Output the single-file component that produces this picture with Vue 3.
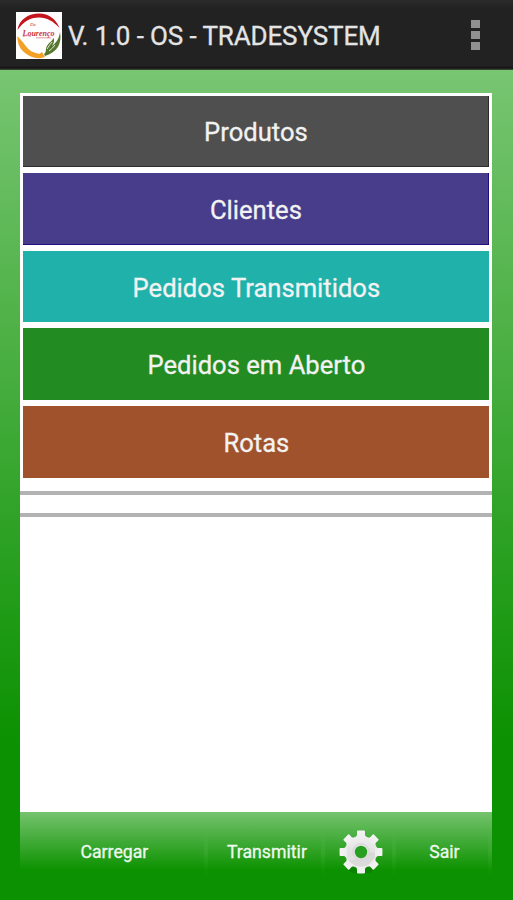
<!-- App.vue -->

<script setup>
const menuItems = [
  { id: 'produtos', label: 'Produtos' },
  { id: 'clientes', label: 'Clientes' },
  { id: 'transmitidos', label: 'Pedidos Transmitidos' },
  { id: 'aberto', label: 'Pedidos em Aberto' },
  { id: 'rotas', label: 'Rotas' },
];

// Gear teeth, one every 45 degrees
const teeth = [0, 45, 90, 135, 180, 225, 270, 315];
</script>

<template>
  <div class="screen">
    <header class="action-bar">
      <svg class="logo" viewBox="0 0 46 47">
        <rect width="46" height="47" fill="#fefefe" />
        <path d="M1.5 18 C3 7 13 1.5 23 1.5 C33 1.5 40 7 43.5 16 C37 9 31 5.5 23 5.5 C14 5.5 7 10 1.5 18 Z" fill="#c4141c" />
        <path d="M1.5 24 C4 27 7 30 9 33 C13 39 18 41 24 42 L27 45 C22 48 14 45 9 41 C4 37 1 31 1.5 24 Z" fill="#f2a126" />
        <path d="M22 43 L26 40 L29 45 L25 46 Z" fill="#f2a126" />
        <path d="M44 20 C46 31 42 40 29 44 L28 42 C31 40 29 37 31 34 C33 30 37 29 37 26 C39 27 38 31 36 34 C40 31 43 27 44 20 Z" fill="#55772f" />
        <path d="M31 37 Q34 32 36 30 M33 39 Q37 36 39 33" fill="none" stroke="#dfe8d2" stroke-width="1" />
        <text x="14" y="14" class="logo-small">De</text>
        <text x="6.5" y="23.5" class="logo-name" textLength="32" lengthAdjust="spacingAndGlyphs">Lourenço</text>
        <path d="M7 24.5 Q11 22.5 15 24.5 M20 25.8 H35" fill="none" stroke="#de8087" stroke-width=".8" />
      </svg>
      <h1 class="title">V. 1.0 - OS - TRADESYSTEM</h1>
      <div class="overflow">
        <span></span>
        <span></span>
        <span></span>
      </div>
    </header>

    <main class="content">
      <nav class="menu">
        <button v-for="item in menuItems" :key="item.id" class="menu-button" :class="item.id">
          {{ item.label }}
        </button>
      </nav>
      <div class="divider"></div>
      <div class="divider second"></div>
    </main>

    <footer class="toolbar">
      <button class="tool carregar">Carregar</button>
      <button class="tool transmitir">Transmitir</button>
      <button class="tool config" aria-label="Config">
        <svg class="gear" viewBox="-23 -23 46 46">
          <defs>
            <linearGradient id="metal" gradientUnits="userSpaceOnUse" x1="0" y1="-22" x2="0" y2="22">
              <stop offset="0" stop-color="#f4f4f4" />
              <stop offset=".55" stop-color="#e0e0e0" />
              <stop offset="1" stop-color="#e9e9e9" />
            </linearGradient>
          </defs>
          <ellipse cx="0" cy="17" rx="13" ry="5" class="shadow" />
          <g fill="url(#metal)">
            <circle r="16.2" />
            <path v-for="a in teeth" :key="a" d="M-5.4 -14 L-4 -17 V-20.6 Q-4 -21.4 -3.2 -21.4 H3.2 Q4 -21.4 4 -20.6 V-17 L5.4 -14 Z" :transform="`rotate(${a})`" />
          </g>
          <path d="M-13 8 Q-1 8 4 3 Q10 -2 14 2 Q13 13 0 15 Q-8 14 -13 8 Z" class="shade" />
          <circle r="8.2" class="ring" />
          <circle r="6.2" class="hole" />
        </svg>
      </button>
      <button class="tool sair">Sair</button>
    </footer>
  </div>
</template>

<style>
body { margin: 0; }
</style>

<style scoped>
.screen { box-sizing: border-box; width: 513px; height: 900px; display: flex; flex-direction: column; overflow: hidden; font-family: Roboto, sans-serif; background: linear-gradient(#78c572 70px, #0b9101 745px); }
button { border: 0; padding: 0; font-family: inherit; }

.action-bar { box-sizing: border-box; flex: none; height: 70px; display: flex; align-items: center; padding: 0 33px 0 16px; background: linear-gradient(#2b2b2b, #222 8px, #222 66px, #160f17 68px, #3a5a38 70px); }
.logo { width: 46px; height: 47px; }
.logo-small { font: italic 5px "Liberation Serif", serif; fill: #c4343a; }
.logo-name { font: italic bold 9px "Liberation Serif", serif; fill: #cc3640; }
.title { margin: 2px 0 0 6px; font-size: 26px; font-weight: 400; line-height: 30px; letter-spacing: -.12px; color: #e4e4e4; white-space: nowrap; -webkit-text-stroke: .3px #e4e4e4; }
.overflow { margin-left: auto; display: flex; flex-direction: column; gap: 3px; }
.overflow span { width: 9px; height: 8px; background: #919191; }

.content { flex: none; box-sizing: border-box; width: 472px; height: 719.5px; margin: 22.5px 0 0 20.4px; background: #fff; }
.menu { display: flex; flex-direction: column; gap: 6.1px; padding: 3.2px 3px 0; }
.menu-button { height: 71.5px; font-size: 25.6px; color: #f2f2f2; padding-top: 2px; -webkit-text-stroke: .3px #f2f2f2; }
.produtos { background: #4f4f4f; border-bottom: 1px solid #2c2c2c; border-right: 1px solid #2c2c2c; }
.clientes { background: #483d8b; border-bottom: 1px solid #1d107c; border-right: 1px solid #1d107c; }
.transmitidos { background: #20b2aa; }
.aberto { background: #228b22; }
.rotas { background: #a0522d; }
.divider { height: 4px; margin-top: 13.6px; background: #b3b3b3; }
.divider.second { margin-top: 17.6px; }

.toolbar { flex: none; display: flex; width: 472px; height: 66px; margin-left: 20.4px; background: linear-gradient(#75c36e, #0c9200 58px); }
.tool { box-sizing: border-box; background: linear-gradient(transparent 18px, rgba(120, 210, 110, .12) 40px, transparent 64px) right / 4px 100% no-repeat; font-size: 17.7px; color: #eef8ee; padding-top: 14px; -webkit-text-stroke: .3px #eef8ee; }
.carregar { width: 188px; }
.transmitir { width: 117px; }
.config { width: 71px; display: flex; justify-content: center; align-items: flex-start; padding-top: 17px; }
.sair { width: 96px; }
.gear { width: 46px; height: 46px; }
.shadow { fill: #075f00; opacity: .3; }
.shade { fill: #cfcfcf; opacity: .45; }
.ring { fill: none; stroke: #d9d9d9; stroke-width: 1.5px; }
.hole { fill: #299f21; }
</style>
